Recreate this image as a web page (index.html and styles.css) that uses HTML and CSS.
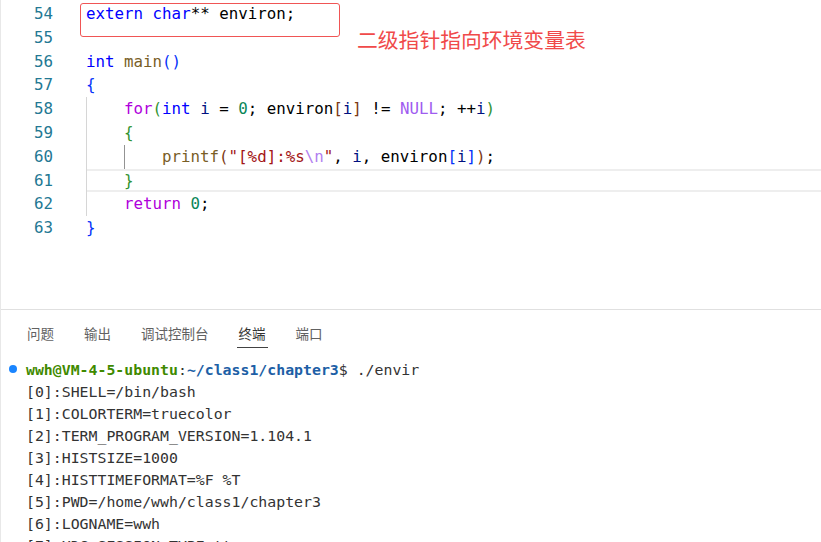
FILE: index.html
```html
<!DOCTYPE html>
<html lang="zh-CN">
<head>
    <meta charset="UTF-8">
    <meta name="viewport" content="width=device-width, initial-scale=1.0">
    <title>environ</title>
    <link rel="stylesheet" href="styles.css">
</head>
<body>
    <div class="window">
        <div class="editor">
            <div class="line"><span class="ln">54</span><span class="code"><span class="kw">extern</span> <span class="kw">char</span>** <span class="var">environ</span>;</span></div>
            <div class="line"><span class="ln">55</span><span class="code"></span></div>
            <div class="line"><span class="ln">56</span><span class="code"><span class="kw">int</span> <span class="fn">main</span><span class="b1">()</span></span></div>
            <div class="line"><span class="ln">57</span><span class="code"><span class="b1">{</span></span></div>
            <div class="line"><span class="ln">58</span><span class="code"><span class="ind"></span><span class="ctl">for</span><span class="b2">(</span><span class="kw">int</span> <span class="id">i</span> = <span class="num">0</span>; <span class="var">environ</span><span class="b3">[</span><span class="id">i</span><span class="b3">]</span> != <span class="mac">NULL</span>; ++<span class="id">i</span><span class="b2">)</span></span></div>
            <div class="line"><span class="ln">59</span><span class="code"><span class="ind"></span><span class="b2">{</span></span></div>
            <div class="line"><span class="ln">60</span><span class="code"><span class="ind"></span><span class="ind active"></span><span class="fn">printf</span><span class="b3">(</span><span class="str">"[%d]:%s<span class="esc">\n</span>"</span>, <span class="id">i</span>, <span class="var">environ</span><span class="b1">[</span><span class="id">i</span><span class="b1">]</span><span class="b3">)</span>;</span></div>
            <div class="line current"><span class="ln">61</span><span class="code"><span class="ind"></span><span class="b2">}</span></span></div>
            <div class="line"><span class="ln">62</span><span class="code"><span class="ind"></span><span class="ctl">return</span> <span class="num">0</span>;</span></div>
            <div class="line"><span class="ln">63</span><span class="code"><span class="b1">}</span></span></div>

            <div class="mark-box"></div>
            <div class="mark-text">二级指针指向环境变量表</div>
        </div>

        <div class="panel">
            <div class="tabs">
                <span class="tab">问题</span>
                <span class="tab">输出</span>
                <span class="tab">调试控制台</span>
                <span class="tab active">终端</span>
                <span class="tab">端口</span>
            </div>
            <div class="terminal">
                <div class="term-line prompt"><span class="dot"></span><span class="user">wwh@VM-4-5-ubuntu</span>:<span class="path">~/class1/chapter3</span>$ ./envir</div>
                <div class="term-line">[0]:SHELL=/bin/bash</div>
                <div class="term-line">[1]:COLORTERM=truecolor</div>
                <div class="term-line">[2]:TERM_PROGRAM_VERSION=1.104.1</div>
                <div class="term-line">[3]:HISTSIZE=1000</div>
                <div class="term-line">[4]:HISTTIMEFORMAT=%F %T</div>
                <div class="term-line">[5]:PWD=/home/wwh/class1/chapter3</div>
                <div class="term-line">[6]:LOGNAME=wwh</div>
                <div class="term-line">[7]:XDG_SESSION_TYPE=tty</div>
            </div>
        </div>
    </div>
</body>
</html>
```

FILE: styles.css
```css
/* styles.css */
body {
    margin: 0;
    background-color: #fff;
    overflow: hidden;
}

.window {
    width: 821px;
    height: 542px;
    border-left: 1px solid #e8e8e8;
    box-sizing: border-box;
    overflow: hidden;
}

.editor {
    position: relative;
    height: 310px;
    padding-top: 2px;
    box-sizing: border-box;
    border-bottom: 1px solid #e0e0e0;
    font-family: "DejaVu Sans Mono", monospace;
    font-size: 15.8px;
    color: #000;
}

.line {
    display: flex;
    height: 23.8px;
    line-height: 23.8px;
    white-space: pre;
}

.ln {
    width: 52px;
    text-align: right;
    color: #237893;
}

.code {
    flex: 1;
    margin-left: 33px;
}

.line.current .code {
    box-shadow: inset 0 2px #eeeeee, inset 0 -2px #eeeeee;
}

.ind {
    display: inline-block;
    width: 38px;
    height: 23.8px;
    vertical-align: top;
    box-sizing: border-box;
    border-left: 1px solid #d6d6d6;
}

.ind.active {
    border-left-color: #939393;
}

.kw { color: #0000ff; }
.fn { color: #795e26; }
.ctl { color: #af00db; }
.mac { color: #a05cf0; }
.num { color: #098658; }
.str { color: #a31515; }
.esc { color: #b27ef0; }
.var { color: #000; }
.id { color: #001080; }
.b1 { color: #0431fa; }
.b2 { color: #319331; }
.b3 { color: #7b3814; }

.mark-box {
    position: absolute;
    left: 79px;
    top: 3px;
    width: 260px;
    height: 34px;
    border: 1.5px solid #f05555;
    border-radius: 3px;
    box-sizing: border-box;
}

.mark-text {
    position: absolute;
    left: 356px;
    top: 26px;
    font-family: "Noto Sans CJK SC", sans-serif;
    font-size: 20.8px;
    line-height: 26px;
    color: #f04a4a;
}

.panel {
    padding-top: 10px;
}

.tabs {
    display: flex;
    gap: 30px;
    padding-left: 26px;
    height: 38px;
    font-family: "Noto Sans CJK SC", sans-serif;
    font-size: 13.5px;
    color: #616161;
}

.tab {
    line-height: 26px;
    height: 28px;
    box-sizing: border-box;
}

.tab.active {
    color: #333;
    border-bottom: 1px solid #424242;
    margin: 0 -2px;
    padding: 0 2px;
}

.terminal {
    padding-top: 1px;
    padding-left: 25px;
    font-family: "DejaVu Sans Mono", monospace;
    font-size: 14.85px;
    color: #333;
}

.term-line {
    position: relative;
    height: 22px;
    line-height: 22px;
    white-space: pre;
}

.prompt .user {
    color: #3f8a00;
    font-weight: bold;
}

.prompt .path {
    color: #1d5fa6;
    font-weight: bold;
}

.dot {
    position: absolute;
    left: -17px;
    top: 6px;
    width: 8px;
    height: 8px;
    border-radius: 50%;
    background-color: #1a85ff;
}
```
